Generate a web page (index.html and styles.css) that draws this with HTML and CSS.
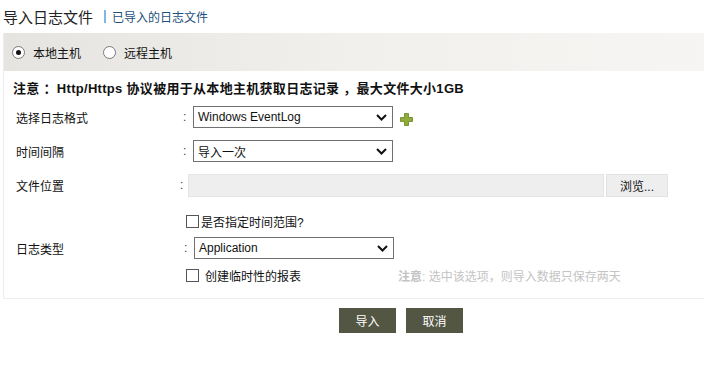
FILE: index.html
```html
<!DOCTYPE html>
<html lang="zh-CN">
<head>
<meta charset="UTF-8">
<title>导入日志文件</title>
<link rel="stylesheet" href="styles.css">
</head>
<body>

  <div class="page-head">
    <span class="page-title">导入日志文件</span>
    <span class="head-sep"></span>
    <a href="#" class="head-link">已导入的日志文件</a>
  </div>

  <div class="panel">
    <div class="panel-tabs">
      <label class="radio-item"><span class="radio checked"></span>本地主机</label>
      <label class="radio-item"><span class="radio"></span>远程主机</label>
    </div>

    <div class="panel-body">
      <div class="notice">注意 ：Http/Https 协议被用于从本地主机获取日志记录 ，最大文件大小1GB</div>

      <div class="form-row">
        <div class="form-label">选择日志格式</div>
        <div class="colon">:</div>
        <div class="select">
          <span>Windows EventLog</span>
          <svg width="11" height="7" viewBox="0 0 11 7"><path d="M1 1 L5.5 5.5 L10 1" fill="none" stroke="#111" stroke-width="2"/></svg>
        </div>
        <svg class="add-icon" width="13" height="13" viewBox="0 0 13 13">
          <path d="M4.5 0.5 H8.5 V4.5 H12.5 V8.5 H8.5 V12.5 H4.5 V8.5 H0.5 V4.5 H4.5 Z" fill="#8fab3c" stroke="#7a9530" stroke-width="1"/>
        </svg>
      </div>

      <div class="form-row">
        <div class="form-label">时间间隔</div>
        <div class="colon">:</div>
        <div class="select">
          <span>导入一次</span>
          <svg width="11" height="7" viewBox="0 0 11 7"><path d="M1 1 L5.5 5.5 L10 1" fill="none" stroke="#111" stroke-width="2"/></svg>
        </div>
      </div>

      <div class="form-row">
        <div class="form-label">文件位置</div>
        <div class="colon colon-file">:</div>
        <div class="file-input"></div>
        <button type="button" class="browse-btn">浏览...</button>
      </div>

      <div class="type-row">
        <div class="form-label">日志类型</div>
        <div class="type-fields">
          <label class="check-item"><span class="checkbox"></span>是否指定时间范围?</label>
          <div class="type-select-row">
            <div class="colon">:</div>
            <div class="select">
              <span>Application</span>
              <svg width="11" height="7" viewBox="0 0 11 7"><path d="M1 1 L5.5 5.5 L10 1" fill="none" stroke="#111" stroke-width="2"/></svg>
            </div>
          </div>
          <div class="temp-row">
            <label class="check-item temp-check"><span class="checkbox"></span>创建临时性的报表</label>
            <span class="temp-note"><b>注意</b>: 选中该选项，则导入数据只保存两天</span>
          </div>
        </div>
      </div>
    </div>
  </div>

  <div class="actions">
    <button type="button" class="action-btn">导入</button>
    <button type="button" class="action-btn">取消</button>
  </div>

</body>
</html>
```

FILE: styles.css
```css
body {
  margin: 0;
  font-family: "Liberation Sans", "Noto Sans CJK SC", sans-serif;
  font-size: 12px;
  color: #111;
  background-color: #fff;
}

.page-head {
  display: flex;
  align-items: center;
  height: 33px;
  padding-left: 3px;
  box-sizing: border-box;
  padding-bottom: 1px;
}

.page-title {
  font-size: 15px;
  color: #222;
}

.head-sep {
  width: 2px;
  height: 13px;
  background-color: #7fb8e6;
  margin-left: 11px;
  margin-right: 6px;
}

.head-link {
  color: #1d4f7c;
  text-decoration: none;
  font-size: 12px;
}

.panel {
  margin-left: 3px;
  border-left: 1px solid #ececec;
  border-bottom: 1px solid #ececec;
}

.panel-tabs {
  display: flex;
  align-items: center;
  height: 38px;
  padding-left: 8px;
  background: linear-gradient(to right, #e6e4e0, #f1f0ed 50%, #f6f5f3);
}

.radio-item {
  display: flex;
  align-items: center;
  margin-right: 22px;
  color: #111;
}

.radio {
  width: 11px;
  height: 11px;
  border: 1px solid #7a7a7a;
  border-radius: 50%;
  background-color: #fff;
  margin-right: 8px;
  position: relative;
}

.radio.checked::after {
  content: "";
  position: absolute;
  left: 3px;
  top: 3px;
  width: 5px;
  height: 5px;
  border-radius: 50%;
  background-color: #111;
}

.panel-body {
  padding: 10px 0 14px 9px;
}

.notice {
  font-weight: bold;
  font-size: 13px;
  line-height: 16px;
  letter-spacing: 0.3px;
  color: #111;
  margin-bottom: 9px;
}

.form-row {
  display: flex;
  align-items: center;
  height: 22px;
  margin-bottom: 12px;
}

.form-label {
  box-sizing: border-box;
  width: 170px;
  padding-left: 3px;
  flex-shrink: 0;
}

.colon {
  width: 10px;
  color: #345;
  flex-shrink: 0;
}

.colon-file {
  width: 8px;
  margin-left: -3px;
}

.select {
  display: flex;
  align-items: center;
  justify-content: space-between;
  box-sizing: border-box;
  width: 200px;
  height: 22px;
  padding: 0 5px 0 4px;
  border: 1px solid #707070;
  background-color: #fff;
  color: #111;
  font-size: 12px;
}

.add-icon {
  margin-left: 7px;
  margin-top: 5px;
}

.file-input {
  box-sizing: border-box;
  width: 416px;
  height: 23px;
  background-color: #eee;
  border: 1px solid #e4e4e4;
}

.browse-btn {
  width: 62px;
  height: 23px;
  margin-left: 2px;
  background-color: #eee;
  border: 1px solid #e2e2e2;
  font-family: inherit;
  font-size: 12px;
  color: #111;
  padding: 0;
}

.type-row {
  display: flex;
  align-items: center;
  margin-top: 17px;
}

.type-fields {
  display: flex;
  flex-direction: column;
}

.check-item {
  display: flex;
  align-items: center;
  height: 16px;
  margin-left: 3px;
  color: #111;
}

.checkbox {
  width: 11px;
  height: 11px;
  border: 1px solid #555;
  background-color: #fff;
  margin-right: 2px;
}

.type-select-row {
  display: flex;
  align-items: center;
  margin: 8px 0 8px 1px;
}

.temp-row {
  display: flex;
  align-items: center;
}

.temp-check .checkbox {
  margin-right: 6px;
}

.temp-check {
  width: 212px;
}

.temp-note {
  color: #c4c4c4;
}

.temp-note b {
  font-weight: bold;
}

.actions {
  display: flex;
  gap: 10px;
  padding: 9px 0 0 339px;
}

.action-btn {
  width: 57px;
  height: 25px;
  border: none;
  background-color: #535643;
  color: #fff;
  font-family: inherit;
  font-size: 12px;
  padding: 0;
}
```
